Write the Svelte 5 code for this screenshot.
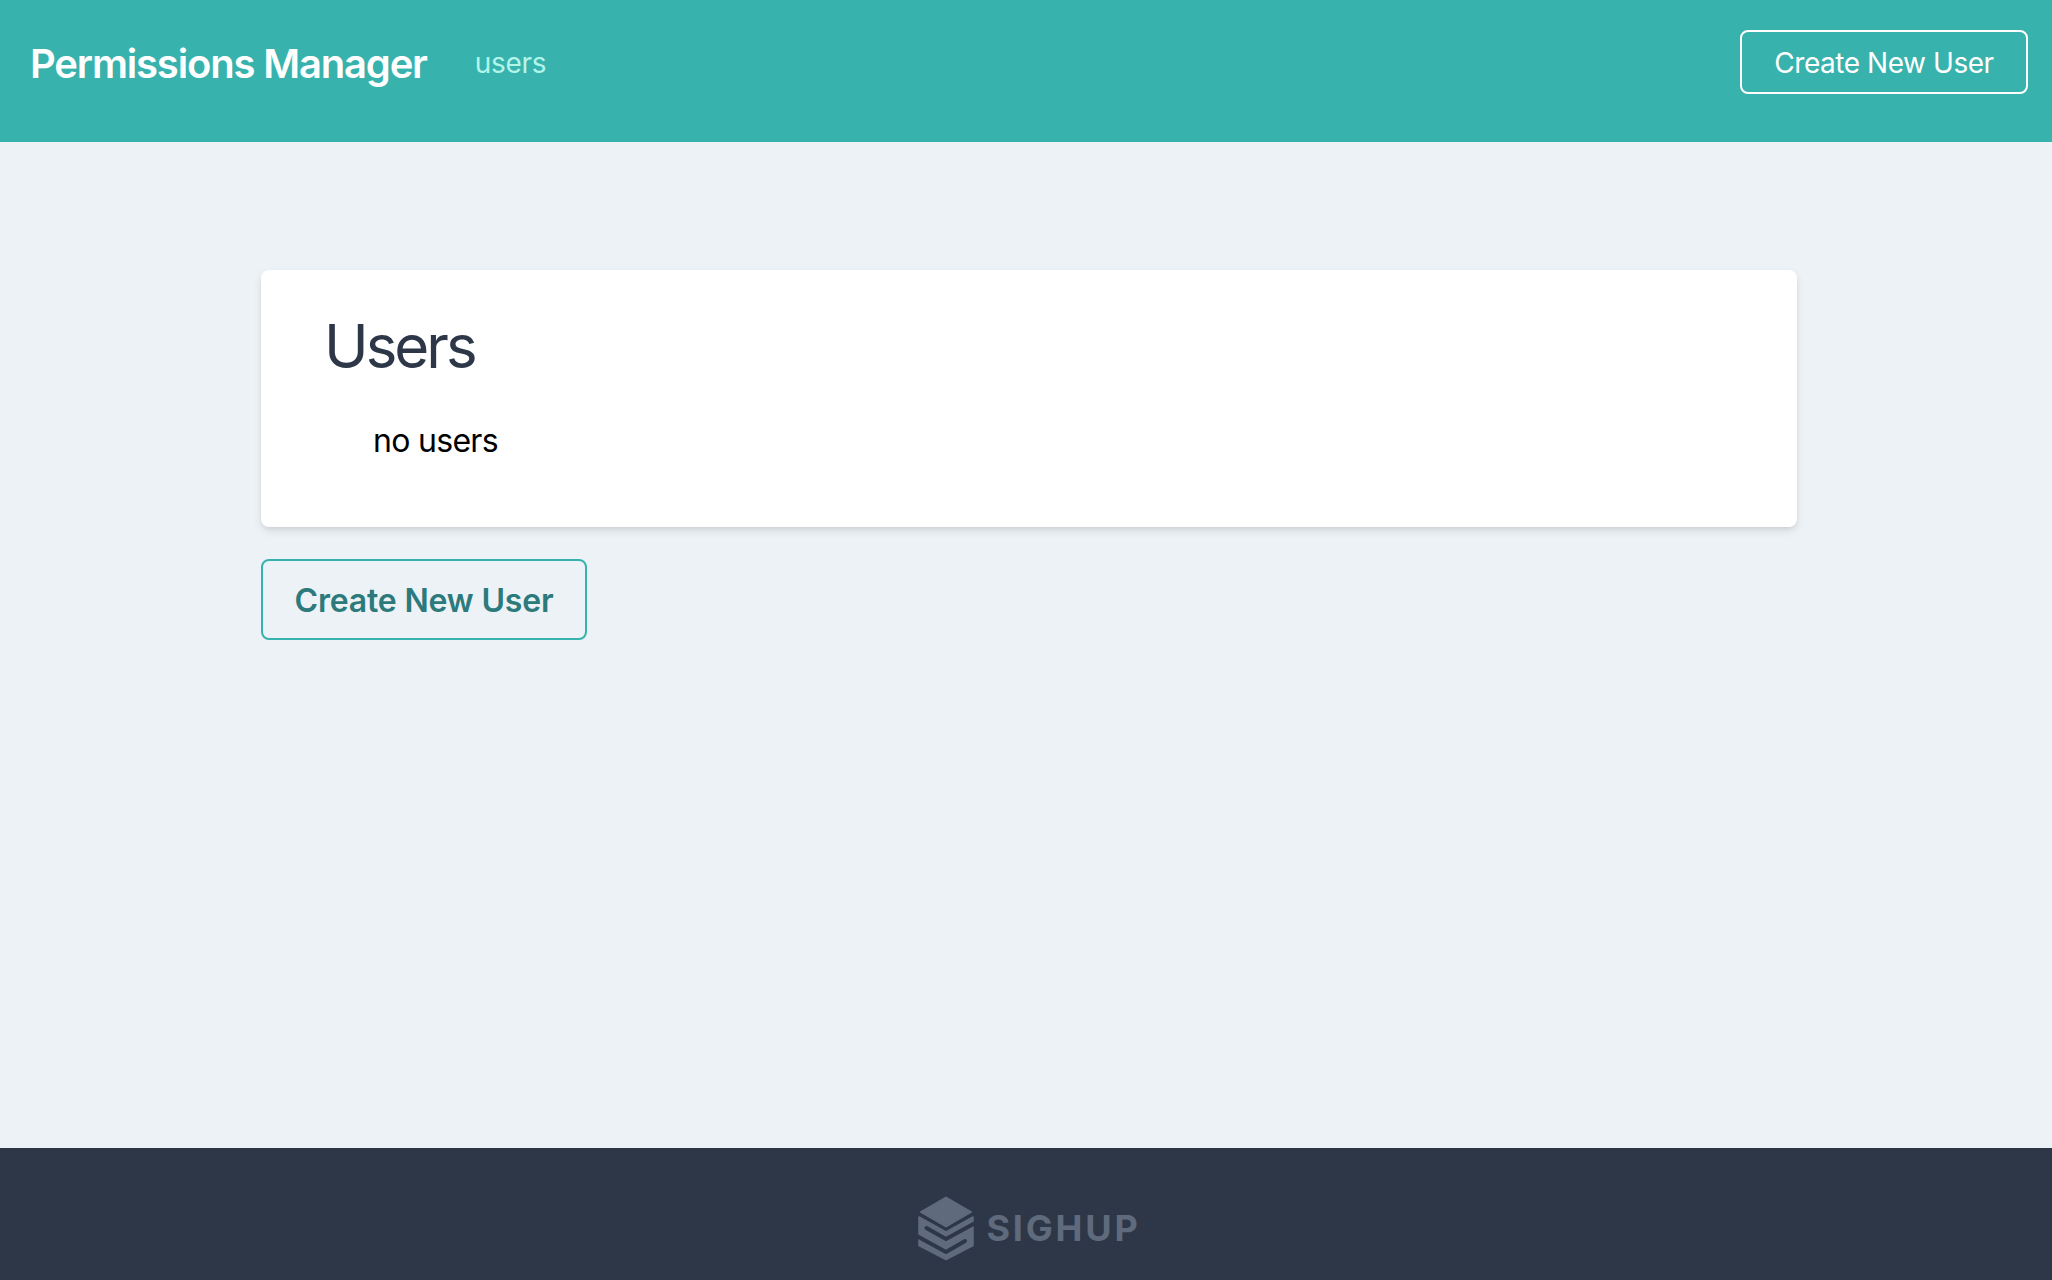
<script>
  const label = 'Create New User';
</script>

<div class="page">
  <header class="topbar">
    <div class="brand">
      <span class="title">Permissions Manager</span>
      <a class="nav-link" href="#users">users</a>
    </div>
    <button class="top-btn">{label}</button>
  </header>

  <main class="content">
    <section class="card">
      <h1>Users</h1>
      <p>no users</p>
    </section>
    <button class="main-btn">{label}</button>
  </main>

  <footer class="footer">
    <svg class="logo" viewBox="0 2.500 70 70" width="70" height="70" aria-hidden="true">
      <path d="M35 7 L60 21.500 L35 36 L10 21.500 Z" fill="#5f6b7c" stroke="#5f6b7c" stroke-width="2" stroke-linejoin="round"/>
      <path d="M8 26.500 L35 41.500 L62 26.500 L62 55 L35 69 L8 55 Z" fill="#5f6b7c" stroke="#5f6b7c" stroke-width="1.500" stroke-linejoin="round"/>
      <path d="M15.500 37.500 L35 48.500 L66 31.500" fill="none" stroke="#2d3748" stroke-width="4" stroke-linecap="round" stroke-linejoin="round"/>
      <path d="M4 44.500 L35 61.500 L54 50.500" fill="none" stroke="#2d3748" stroke-width="4" stroke-linecap="round" stroke-linejoin="round"/>
    </svg>
    <span class="wordmark">SIGHUP</span>
  </footer>
</div>

<style>
  :global(body) {
    margin: 0;
    background: #edf2f7;
    font-family: Inter, "Liberation Sans", sans-serif;
  }
  .page {
    min-height: 1280px;
    display: flex;
    flex-direction: column;
  }
  .topbar {
    height: 142px;
    box-sizing: border-box;
    background: #38b2ac;
    display: flex;
    justify-content: space-between;
    align-items: flex-start;
    padding: 30px 24px 0 30px;
  }
  .brand {
    display: flex;
    align-items: center;
    height: 66px;
  }
  .title {
    color: #fff;
    font-size: 40px;
    font-weight: 600;
    letter-spacing: -1.17px;
  }
  .nav-link {
    color: #b2f5ea;
    font-size: 28px;
    letter-spacing: -0.3px;
    margin-left: 48px;
    text-decoration: none;
  }
  .top-btn {
    width: 288px;
    height: 64px;
    box-sizing: border-box;
    background: transparent;
    border: 2px solid #fff;
    border-radius: 8px;
    color: #fff;
    font: 400 28px Inter, sans-serif;
    letter-spacing: -0.45px;
    padding: 2px 0 0;
  }
  .content {
    flex: 1;
    width: 1536px;
    margin-left: 261px;
    padding-top: 128px;
    box-sizing: border-box;
  }
  .card {
    height: 257px;
    box-sizing: border-box;
    background: #fff;
    border-radius: 8px;
    box-shadow: 0 4px 10px -1px rgba(0,0,0,.12), 0 2px 4px -1px rgba(0,0,0,.06);
    padding: 44px 63px;
  }
  h1 {
    margin: 0;
    color: #2d3748;
    font-size: 60px;
    font-weight: 400;
    letter-spacing: -3px;
    line-height: 64px;
  }
  p {
    margin: 44px 0 0 49px;
    color: #000;
    font-size: 32px;
    letter-spacing: -0.7px;
    line-height: 38px;
  }
  .main-btn {
    margin-top: 32px;
    width: 326px;
    height: 81px;
    box-sizing: border-box;
    background: transparent;
    border: 2px solid #38b2ac;
    border-radius: 8px;
    color: #2c7a7b;
    font: 600 32px Inter, sans-serif;
    letter-spacing: -0.17px;
    padding: 1px 0 0;
    display: block;
  }
  .footer {
    height: 132px;
    box-sizing: border-box;
    padding-top: 27px;
    background: #2d3748;
    display: flex;
    align-items: center;
    justify-content: center;
    gap: 5px;
  }
  .wordmark {
    color: #5f6b7c;
    font: 700 36px Inter, sans-serif;
    letter-spacing: 2.8px;
  }
</style>
